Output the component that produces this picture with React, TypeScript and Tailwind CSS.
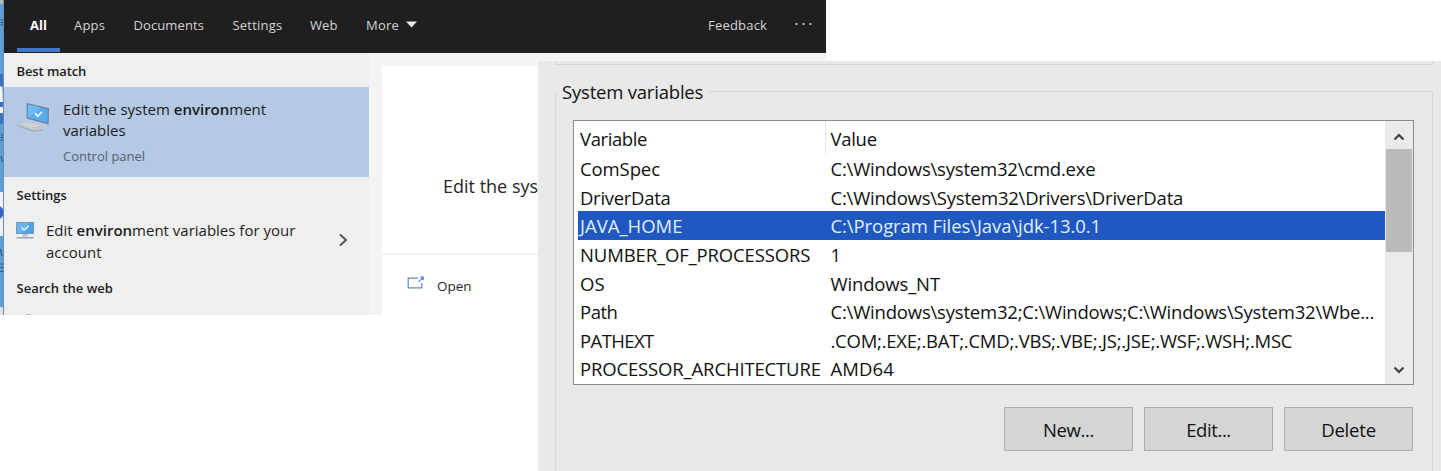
const tabs = [
  { label: "Apps", cls: "w-[59.5px] tracking-[0.2px]" },
  { label: "Documents", cls: "w-[99px] tracking-[0.1px]" },
  { label: "Settings", cls: "w-[77.5px] tracking-[0.2px]" },
  { label: "Web", cls: "w-[56px] tracking-[0.1px]" },
];

const variables = [
  { name: "ComSpec", nameCls: "tracking-[-0.1px]", value: "C:\\Windows\\system32\\cmd.exe", valueCls: "tracking-[-0.2px]" },
  { name: "DriverData", nameCls: "tracking-[-0.3px]", value: "C:\\Windows\\System32\\Drivers\\DriverData", valueCls: "tracking-[-0.22px]" },
  { name: "JAVA_HOME", nameCls: "", value: "C:\\Program Files\\Java\\jdk-13.0.1", valueCls: "tracking-[-0.08px]", selected: true },
  { name: "NUMBER_OF_PROCESSORS", nameCls: "tracking-[-0.13px]", value: "1", valueCls: "" },
  { name: "OS", nameCls: "", value: "Windows_NT", valueCls: "tracking-[-0.15px]" },
  { name: "Path", nameCls: "tracking-[-0.5px]", value: "C:\\Windows\\system32;C:\\Windows;C:\\Windows\\System32\\Wbe...", valueCls: "tracking-[-0.2px]" },
  { name: "PATHEXT", nameCls: "tracking-[-0.6px]", value: ".COM;.EXE;.BAT;.CMD;.VBS;.VBE;.JS;.JSE;.WSF;.WSH;.MSC", valueCls: "tracking-[-0.24px]" },
  { name: "PROCESSOR_ARCHITECTURE", nameCls: "tracking-[-0.15px]", value: "AMD64", valueCls: "tracking-[0.1px]" },
];

function DesktopEdge() {
  return (
    <svg className="h-[315px] w-1 flex-none" viewBox="0 0 4 315">
      <path d="M0 0H4V315H0Z" fill="#5c9fd9" />
      <path d="M0 0H4V4H0Z" fill="#b9b9b9" />
      <path d="M0 74H4V124H0Z" fill="#3d72c2" />
      <path d="M0 86 2.5 87 3 102H0ZM0 107H3V113H0Z" fill="#f1f3f7" />
      <path d="M0 192H3V236H0Z" fill="#eef1f6" />
      <path d="M0 206 3 209V216L0 219Z" fill="#3468c0" />
      <path d="M0 307H3V315H0Z" fill="#dfe3e8" />
      <path
        d="M.5 20H3M.5 22.5H3M.5 25H3M.5 134 3 135.5M.5 137.5H3M.5 140H3M1 156 2.5 162M.5 249 2 256M.5 264H3M.5 267.5H3M.5 271.5H3"
        stroke="#2d4c6c"
        fill="none"
      />
      <path d="M3.5 0V315" stroke="#6f8ba8" />
    </svg>
  );
}

function LaptopIcon() {
  return (
    <svg className="mt-[15px] h-8 w-8 flex-none" viewBox="0 0 32 32" fill="none">
      <path d="M9.8 1 32 6.2 31.6 22.5 9.5 16.5Z" fill="#6b8095" />
      <path d="M11 2.4 30.7 7.2 30.4 20.9 10.8 15.6Z" fill="#5aabee" />
      <path d="M11 2.4 24 5.5 12 15.8 10.8 15.6Z" fill="#6fbaf4" />
      <path d="m18 11 2.6 3.2 4.4-4.4" stroke="#e9f6ff" strokeWidth="1.7" />
      <path d="M0 22.5 8 19.7 29.5 23 25.5 28.3 16 29.5Z" fill="#c3c8ce" />
      <path d="m3 22.6 6-1.8 13 2.5-6.5 3.5Z" fill="#d9dde1" />
      <path d="m0 22.5 16 6 9.5-1-.5 1.2-9 1L0 23.7Z" fill="#a0a8b1" />
      <path d="M5 22.7 18 26M8 21.5 21 24.6" stroke="#aeb6be" strokeWidth=".6" />
    </svg>
  );
}

function MonitorIcon() {
  return (
    <svg className="mt-[11px] h-[18px] w-[18px] flex-none" viewBox="0 0 18 18" fill="none">
      <path d="M0 0H18V12H0Z" fill="#7896b3" />
      <path d="M1 1H17V11H1Z" fill="#4da4ec" />
      <path d="M1 1H14L5 11H1Z" fill="#6ab6f3" />
      <path d="m5.5 5.6 2.6 2.7 4.8-4.6" stroke="#ecf7ff" strokeWidth="1.4" />
      <path d="M7 12H11L12 14.5H6Z" fill="#b8c6d4" />
      <path d="M.5 15H17.5V16.5H.5Z" fill="#9ba5ae" />
    </svg>
  );
}

function SearchPanel() {
  return (
    <div className="flex h-[315px] w-[826px] flex-none">
      <DesktopEdge />
      <div className="flex min-w-0 flex-1 flex-col bg-[#f4f4f4]">
        <div className="flex h-[53px] flex-none bg-[#1f1f1f] text-[13px] leading-[50px] text-[#d4d4d4]">
          <div className="ml-[13px] flex w-[43px] flex-none flex-col items-center font-bold text-white">
            <span className="h-[48px]">All</span>
            <span className="h-[4px] w-full bg-[#4076cc]" />
          </div>
          <div className="w-[14px] flex-none" />
          {tabs.map((t) => (
            <span key={t.label} className={`flex-none ${t.cls}`}>{t.label}</span>
          ))}
          <span className="w-[39.5px] flex-none tracking-[0.2px]">More</span>
          <svg className="mt-[21px] h-[7px] w-[11px] flex-none" viewBox="0 0 11 7">
            <path d="M0 .5H11L5.5 6.5Z" fill="#e6e6e6" />
          </svg>
          <span className="ml-auto w-[87px] tracking-[0.2px]">Feedback</span>
          <svg className="mt-[22px] mr-[14px] h-[4px] w-[17px]" viewBox="0 0 17 4" fill="#d8d8d8">
            <circle cx="1.5" cy="2" r="1.1" />
            <circle cx="8.5" cy="2" r="1.1" />
            <circle cx="15.5" cy="2" r="1.1" />
          </svg>
        </div>
        <div className="flex min-h-0 flex-1">
          <div className="flex w-[365px] flex-none flex-col overflow-hidden bg-[#efefef] text-[#1c1c1c]">
            <h2 className="h-[34px] flex-none pl-[12.5px] text-[13px] leading-[36px] font-semibold tracking-[-0.1px]">Best match</h2>
            <div className="flex h-[90px] flex-none bg-[#b4c9e3] pl-[13px]">
              <LaptopIcon />
              <div className="pt-[11.5px] pl-[14px]">
                <p className="text-[15px] leading-[21.5px]">
                  Edit the system <b className="font-semibold">environ</b>ment
                  <br />
                  variables
                </p>
                <p className="pt-[5px] text-[13px] leading-[18px] text-[#56616f]">Control panel</p>
              </div>
            </div>
            <h2 className="h-[34px] flex-none pl-[12.5px] text-[13px] leading-[36px] font-semibold">Settings</h2>
            <div className="flex h-[60px] flex-none pl-[12px]">
              <MonitorIcon />
              <p className="w-[302px] flex-none pt-[9px] pl-[12px] text-[15px] leading-[21.5px]">
                Edit <b className="font-semibold">environ</b>ment variables for your
                <br />
                account
              </p>
              <svg className="mt-[22px] ml-[3px] h-[14px] w-[9px] flex-none" viewBox="0 0 9 14" fill="none">
                <path d="m1 1.5 6 5.5-6 5.5" stroke="#555" strokeWidth="2" />
              </svg>
            </div>
            <h2 className="h-[43px] flex-none pl-[12.5px] text-[13px] leading-[34px] font-semibold">Search the web</h2>
            <div className="ml-[20px] h-3 w-[9px] flex-none rounded-full border border-[#999]" />
          </div>
          <div className="w-[13px] flex-none" />
          <div className="mt-[13px] flex flex-1 flex-col bg-white text-[#262626]">
            <div className="h-[189px] flex-none border-b-2 border-[#f3f3f3] pt-[107px] pl-[61px] text-[18px] leading-[26px] whitespace-nowrap">
              Edit the sys
            </div>
            <div className="flex pt-[20px] pl-[25px]">
              <svg className="mt-px h-[14px] w-[18px]" viewBox="0 0 18 14" fill="none" stroke="#5d8bd3" strokeWidth="1.2">
                <path d="M11 2.2H1.2V11.9H14.8V7" />
                <path d="m11.5 5.8 4-4" />
                <path d="M13.6.6H16.9V3.9H15.6L13.6 1.9Z" fill="#5d8bd3" stroke="none" />
              </svg>
              <span className="pl-[12px] text-[13.5px] leading-[22px]">Open</span>
            </div>
          </div>
        </div>
      </div>
    </div>
  );
}

function Chevron({ d }: { d: string }) {
  return (
    <svg className="h-[8px] w-[12px]" viewBox="0 0 12 8" fill="none">
      <path d={d} stroke="#404040" strokeWidth="2.2" />
    </svg>
  );
}

function VariableList() {
  return (
    <div className="flex h-[265px] w-[841px] border border-[#888b90] bg-white">
      <div className="flex min-w-0 flex-1 flex-col overflow-hidden pl-[4px]">
        <div className="flex h-[33px] flex-none pl-[2px] leading-[35px]">
          <span className="h-full w-[246px] border-r border-[#e3e6e8] tracking-[-0.4px]">Variable</span>
          <span className="pl-[4.5px] tracking-[-0.3px]">Value</span>
        </div>
        {variables.map((v) => (
          <div
            key={v.name}
            className={
              v.selected
                ? "flex h-[28.65px] flex-none bg-[#1e58c0] pl-[2px] leading-[30px] whitespace-pre text-[#e4edfb]"
                : "flex h-[28.65px] flex-none pl-[2px] leading-[30px] whitespace-pre"
            }
          >
            <span className={`w-[250.5px] flex-none ${v.nameCls}`}>{v.name}</span>
            <span className={`${v.valueCls}`}>{v.value}</span>
          </div>
        ))}
      </div>
      <div className="flex w-[28px] flex-none flex-col items-center bg-[#eaeaea]">
        <div className="flex h-[28px] flex-none items-center pt-[3px]">
          <Chevron d="m1.5 6.5 4.5-4.5 4.5 4.5" />
        </div>
        <div className="h-[103px] w-[26px] flex-none bg-[#bababa]" />
        <div className="mt-auto pb-[10px]">
          <Chevron d="m1.5 1.5 4.5 4.5 4.5-4.5" />
        </div>
      </div>
    </div>
  );
}

function DialogButton({ label, cls }: { label: string; cls: string }) {
  return (
    <button className={`h-[44px] w-[129px] border border-[#acacac] bg-[#d5d5d5] leading-[44px] ${cls}`}>
      {label}
    </button>
  );
}

function VariablesDialog() {
  return (
    <div className="absolute top-[61px] left-[538px] flex h-[410px] w-[903px] flex-col overflow-hidden bg-[#e9e9e9] pr-[8px] pl-[17px] text-[18.5px] text-[#111]">
      <div className="h-[4px] flex-none border-x border-b border-[#d6d6d6]" />
      <div className="flex h-[54px] flex-none flex-col">
        <div className="z-10 flex h-[54px] items-center">
          <h2 className="ml-px bg-[#e9e9e9] px-[6px] leading-[28px] tracking-[-0.2px]">System variables</h2>
        </div>
      </div>
      <div className="-mt-[28px] flex h-[400px] flex-none flex-col border border-[#d6d6d6] pt-[28px] pl-[17px]">
        <VariableList />
        <div className="flex gap-[11px] pt-[22px] pl-[431px]">
          <DialogButton label="New..." cls="tracking-[-0.4px]" />
          <DialogButton label="Edit..." cls="tracking-[-0.4px]" />
          <DialogButton label="Delete" cls="tracking-[-0.2px]" />
        </div>
      </div>
    </div>
  );
}

export default function App() {
  return (
    <main className="relative h-[471px] w-[1441px] overflow-hidden bg-white font-['Open_Sans','Noto_Sans',sans-serif]">
      <SearchPanel />
      <VariablesDialog />
    </main>
  );
}
